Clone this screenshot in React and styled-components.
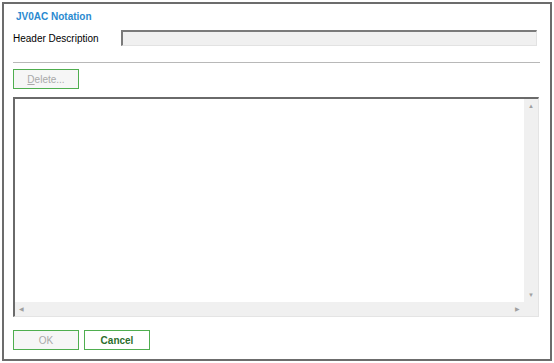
import React from "react";
import styled, { createGlobalStyle } from "styled-components";

const GlobalStyle = createGlobalStyle`
  html, body {
    margin: 0;
    padding: 0;
    background: #ffffff;
    font-family: "Liberation Sans", Arial, sans-serif;
  }
`;

const App = () => {
  return (
    <>
      <GlobalStyle />
      <Window>
        <Title>JV0AC Notation</Title>
        <FieldRow>
          <Label>Header Description</Label>
          <TextInput type="text" disabled />
        </FieldRow>
        <Separator />
        <Toolbar>
          <Button disabled>
            <u>D</u>elete...
          </Button>
        </Toolbar>
        <ListBox>
          <ListBody>
            <Content />
            <VScroll>
              <Arrow>▲</Arrow>
              <Arrow>▼</Arrow>
            </VScroll>
          </ListBody>
          <HScrollRow>
            <HScroll>
              <Arrow>◀</Arrow>
              <Arrow>▶</Arrow>
            </HScroll>
            <Corner />
          </HScrollRow>
        </ListBox>
        <Footer>
          <Button disabled>OK</Button>
          <Button primary>Cancel</Button>
        </Footer>
      </Window>
    </>
  );
};

export default App;

const Window = styled.div`
  box-sizing: border-box;
  margin: 2px 0 0 2px;
  width: 550px;
  height: 359px;
  border: 2px solid #6c6c6c;
  padding: 6px 11px 0 9px;
  display: flex;
  flex-direction: column;
  background: #fff;
`;

const Title = styled.div`
  font-size: 10px;
  font-weight: bold;
  color: #2a8ad0;
  margin-left: 3px;
  height: 14px;
  line-height: 14px;
`;

const FieldRow = styled.div`
  display: flex;
  align-items: center;
  margin-top: 6px;
  height: 16px;
`;

const Label = styled.div`
  width: 108px;
  font-size: 10px;
  color: #000;
`;

const TextInput = styled.input`
  box-sizing: border-box;
  flex: 1;
  height: 16px;
  margin: 0 2px 0 0;
  padding: 0;
  border: none;
  border-top: 2px solid #7a7a7a;
  border-left: 2px solid #7a7a7a;
  border-right: 1px solid #e2e2e2;
  border-bottom: 1px solid #e2e2e2;
  background: #f0f0f0;
  outline: none;
`;

const Separator = styled.div`
  height: 1px;
  background: #b8b8b8;
  margin-top: 16px;
  margin-right: -1px;
`;

const Toolbar = styled.div`
  display: flex;
  margin-top: 6px;
`;

const Button = styled.button`
  box-sizing: border-box;
  width: 66px;
  height: 20px;
  padding: 0;
  border: 1px solid #4fae4f;
  background: ${(p) => (p.primary ? "#ffffff" : "#f6f6f6")};
  color: ${(p) => (p.primary ? "#2c6e2c" : "#a9a9a9")};
  font-family: "Liberation Sans", Arial, sans-serif;
  font-size: 10px;
  font-weight: ${(p) => (p.primary ? "bold" : "normal")};
  cursor: default;
`;

const ListBox = styled.div`
  box-sizing: border-box;
  margin-top: 8px;
  height: 220px;
  border-top: 2px solid #6a6a6a;
  border-left: 2px solid #6a6a6a;
  border-right: 1px solid #e4e4e4;
  border-bottom: 1px solid #e4e4e4;
  display: flex;
  flex-direction: column;
`;

const ListBody = styled.div`
  flex: 1;
  display: flex;
`;

const Content = styled.div`
  flex: 1;
  background: #fff;
`;

const VScroll = styled.div`
  width: 14px;
  background: #f0f0f0;
  display: flex;
  flex-direction: column;
  justify-content: space-between;
  align-items: center;
  padding: 3px 0;
`;

const HScrollRow = styled.div`
  display: flex;
  height: 14px;
`;

const HScroll = styled.div`
  flex: 1;
  background: #f0f0f0;
  display: flex;
  justify-content: space-between;
  align-items: center;
  padding: 0 4px;
`;

const Corner = styled.div`
  width: 14px;
  background: #f0f0f0;
`;

const Arrow = styled.span`
  font-size: 6px;
  line-height: 8px;
  color: #a0a0a0;
`;

const Footer = styled.div`
  display: flex;
  gap: 5px;
  margin-top: 13px;
`;
